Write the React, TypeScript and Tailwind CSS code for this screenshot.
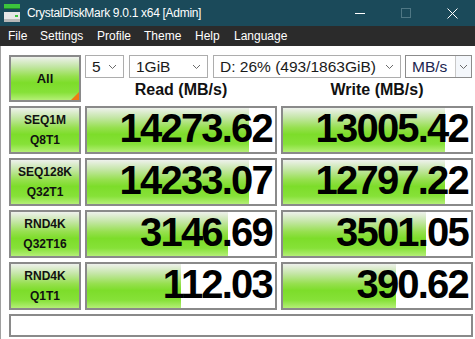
import React from "react";

const GREEN =
  "bg-[linear-gradient(to_bottom,#eef1ec_0%,#c4e6a6_22%,#96e04e_45%,#7ddd2a_60%,#86e138_82%,#b4ef76_100%)]";

const rows = [
  { l1: "SEQ1M", l2: "Q8T1", read: "14273.62", rp: 86, write: "13005.42", wp: 86 },
  { l1: "SEQ128K", l2: "Q32T1", read: "14233.07", rp: 86, write: "12797.22", wp: 86 },
  { l1: "RND4K", l2: "Q32T16", read: "3146.69", rp: 75, write: "3501.05", wp: 76 },
  { l1: "RND4K", l2: "Q1T1", read: "112.03", rp: 50, write: "390.62", wp: 60 },
];

function Chevron() {
  return (
    <svg width="9" height="6" viewBox="0 0 9 6" className="shrink-0">
      <path d="M1 1 L4.5 4.5 L8 1" fill="none" stroke="#6a6a6a" strokeWidth="1" />
    </svg>
  );
}

function Select({ w, text }: { w: string; text: string }) {
  return (
    <div className={`${w} h-[23px] bg-white border border-[#adadad] flex items-center justify-between pl-[6px] pr-[6px]`}>
      <span className="text-[15.5px] text-[#1a1a1a] leading-none">{text}</span>
      <Chevron />
    </div>
  );
}

function Score({ value, pct }: { value: string; pct: number }) {
  return (
    <div className="relative h-[48px] border-2 border-[#8a8a8a] bg-white overflow-hidden">
      <div className={`absolute left-0 top-0 bottom-0 ${GREEN}`} style={{ width: `${pct}%` }} />
      <div className="relative h-full flex items-center justify-end pr-[3px] pb-[4px]">
        <span className="text-[40px] font-bold leading-none tracking-[-1.8px] text-black">{value}</span>
      </div>
    </div>
  );
}

export default function App() {
  return (
    <div className="w-[475px] h-[339px] overflow-hidden flex flex-col font-['Liberation_Sans',Arial,sans-serif]">
      {/* title bar */}
      <div className="h-[26px] bg-[#1b4a5a] flex items-center text-white">
        <svg width="17" height="19" viewBox="0 0 17 19" className="ml-[4px] mt-[1px]">
          <rect x="0" y="0" width="16" height="4" fill="#3cc43c" />
          <rect x="0" y="4" width="16" height="1" fill="#1f8a2a" />
          <rect x="0" y="8" width="16" height="10" fill="#e6e6e6" />
          <rect x="0" y="15" width="16" height="3" fill="#b8b8b8" />
          <rect x="11" y="11" width="3" height="2" fill="#3cc43c" />
        </svg>
        <span className="ml-[6px] text-[12px] tracking-[-0.3px]">CrystalDiskMark 9.0.1 x64 [Admin]</span>
        <div className="ml-auto flex items-center">
          <div className="w-[46px] h-[26px] flex items-center justify-center">
            <div className="w-[10px] h-px bg-white" />
          </div>
          <div className="w-[46px] h-[26px] flex items-center justify-center">
            <div className="w-[10px] h-[10px] border border-[#4f7784]" />
          </div>
          <div className="w-[46px] h-[26px] flex items-center justify-center">
            <svg width="11" height="11" viewBox="0 0 11 11">
              <path d="M0.5 0.5 L10.5 10.5 M10.5 0.5 L0.5 10.5" stroke="white" strokeWidth="1" />
            </svg>
          </div>
        </div>
      </div>

      {/* menu bar */}
      <div className="h-[20px] bg-[#2b2b2b] flex items-center text-white text-[12px] pl-[8px]">
        <span className="w-[32px]">File</span>
        <span className="w-[57px]">Settings</span>
        <span className="w-[47px]">Profile</span>
        <span className="w-[51px]">Theme</span>
        <span className="w-[39px]">Help</span>
        <span>Language</span>
      </div>

      {/* content */}
      <div className="flex-1 bg-white border-l border-[#a0a0a0] pl-[8px] pt-[9px]">
        <div className="grid grid-cols-[72px_192px_192px] grid-rows-[47px_48px_48px_48px_48px] gap-[4px]">
          <div className={`relative border-2 border-[#8a8a8a] ${GREEN} flex items-center justify-center`}>
            <span className="text-[13px] font-bold text-[#111]">All</span>
            <div className="absolute right-0 bottom-0 w-0 h-0 border-l-[8px] border-l-transparent border-b-[8px] border-b-[#f07a14]" />
          </div>
          <div className="col-span-2 flex flex-col">
            <div className="flex gap-[5px]">
              <Select w="w-[39px]" text="5" />
              <Select w="w-[79px]" text="1GiB" />
              <Select w="w-[188px]" text="D: 26% (493/1863GiB)" />
              <div className="w-[67px] h-[23px] ml-[-1px] bg-white border border-[#8c8c8c] flex items-center">
                <span className="flex-1 pl-[6px] text-[15.5px] leading-none text-[#1b2650]">MB/s</span>
                <div className="w-[16px] h-full border-l border-[#c8c8c8] bg-[#f4f7fb] flex items-center justify-center">
                  <Chevron />
                </div>
              </div>
            </div>
            <div className="flex-1 grid grid-cols-2 gap-[4px]">
              <div className="flex items-center justify-center text-[16px] font-bold text-[#111]">Read (MB/s)</div>
              <div className="flex items-center justify-center text-[16px] font-bold text-[#111]">Write (MB/s)</div>
            </div>
          </div>

          {rows.map((r, i) => (
            <React.Fragment key={i}>
              <div className={`border-2 border-[#8a8a8a] ${GREEN} flex flex-col items-center justify-center text-[12px] font-bold text-[#111] leading-[20px]`}>
                <span>{r.l1}</span>
                <span>{r.l2}</span>
              </div>
              <Score value={r.read} pct={r.rp} />
              <Score value={r.write} pct={r.wp} />
            </React.Fragment>
          ))}
        </div>
        <div className="mt-[4px] w-[464px] h-[23px] bg-white border-2 border-[#8a8a8a]" />
      </div>
    </div>
  );
}
